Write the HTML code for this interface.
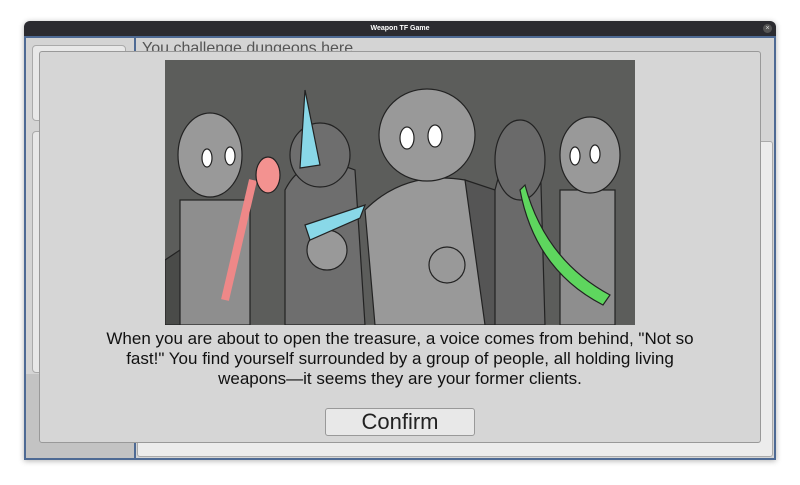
<!DOCTYPE html>
<html><head><style>
body{margin:0;width:800px;height:485px;background:#fff;position:relative;overflow:hidden;font-family:"Liberation Sans",sans-serif}
.a{position:absolute}
</style></head><body>
<div class="a" style="left:24px;top:21px;width:752px;height:439px;background:#d4d4d4;border-radius:6px 6px 0 0;box-shadow:0 1px 6px rgba(0,0,0,.3);overflow:hidden">
 <div class="a" style="left:0;top:0;width:752px;height:15px;background:#2b2b30;color:#fff;font-size:7px;font-weight:bold;text-align:center;line-height:15px">Weapon TF Game</div>
 <div class="a" style="right:4px;top:3px;width:9px;height:9px;border-radius:50%;background:#555;color:#ddd;font-size:7px;line-height:9px;text-align:center">×</div>
 <div class="a" style="left:0;top:15px;width:752px;height:424px;border:2px solid #4e6a94;border-top-width:2px;box-sizing:border-box"></div>
 <div class="a" style="left:8px;top:24px;width:92px;height:74px;background:#e8e8e8;border:1px solid #aaa;border-radius:4px"></div>
 <div class="a" style="left:8px;top:110px;width:92px;height:240px;background:#e8e8e8;border:1px solid #aaa;border-radius:4px"></div>
 <div class="a" style="left:2px;top:353px;width:108px;height:84px;background:#c3c3c3"></div>
 <div class="a" style="left:110px;top:17px;width:2px;height:420px;background:#4e6a94"></div>
 <div class="a" style="left:118px;top:19px;font-size:16px;color:#555">You challenge dungeons here</div>
 <div class="a" style="left:113px;top:120px;width:634px;height:314px;background:#ececec;border:1px solid #aaa;border-radius:3px"></div>
</div>
<div class="a" style="left:39px;top:51px;width:720px;height:390px;background:#d6d6d6;border:1px solid #999;border-radius:3px"></div>
<svg class="a" style="left:165px;top:60px" width="470" height="265" viewBox="0 0 470 265">
<rect width="470" height="265" fill="#5c5d5b"/>
<g stroke="#222" stroke-width="1.2" fill="#999">
<path d="M0 200 L30 180 L60 265 L0 265Z" fill="#4a4b49"/>
<path d="M120 130 Q140 90 190 110 L200 265 L120 265Z" fill="#6e6e6e"/>
<ellipse cx="155" cy="95" rx="30" ry="32" fill="#6e6e6e"/>
<path d="M300 120 L360 140 L370 265 L300 265Z" fill="#555"/>
<path d="M330 130 Q350 50 375 90 L380 265 L330 265Z" fill="#6a6a6a"/>
<ellipse cx="355" cy="100" rx="25" ry="40" fill="#6a6a6a"/>
<rect x="15" y="140" width="70" height="125" fill="#8e8e8e"/>
<ellipse cx="45" cy="95" rx="32" ry="42" fill="#999"/>
<rect x="395" y="130" width="55" height="135" fill="#8e8e8e"/>
<ellipse cx="425" cy="95" rx="30" ry="38" fill="#999"/>
<path d="M200 150 Q240 110 300 120 L320 265 L210 265Z" fill="#999"/>
<ellipse cx="262" cy="75" rx="48" ry="46" fill="#999"/>
<circle cx="162" cy="190" r="20" fill="#999"/>
<circle cx="282" cy="205" r="18" fill="#999"/>
<path d="M60 240 L88 120" stroke="#e88" stroke-width="8"/>
<ellipse cx="103" cy="115" rx="12" ry="18" fill="#f39290"/>
<path d="M140 30 L155 105 L135 108Z" fill="#89d8e8"/>
<path d="M140 165 L200 145 L195 158 L145 180Z" fill="#89d8e8"/>
<path d="M360 125 Q380 200 445 235 L438 245 Q370 210 355 130Z" fill="#5ed65e"/>
<g fill="#fff"><ellipse cx="42" cy="98" rx="5" ry="9"/><ellipse cx="65" cy="96" rx="5" ry="9"/><ellipse cx="242" cy="78" rx="7" ry="11"/><ellipse cx="270" cy="76" rx="7" ry="11"/><ellipse cx="410" cy="96" rx="5" ry="9"/><ellipse cx="430" cy="94" rx="5" ry="9"/></g>
</g>
</svg>
<div class="a" style="left:90px;top:329px;width:620px;text-align:center;font-size:17px;line-height:20px;color:#111">When you are about to open the treasure, a voice comes from behind, "Not so fast!" You find yourself surrounded by a group of people, all holding living weapons—it seems they are your former clients.</div>
<div class="a" style="left:325px;top:408px;width:148px;height:26px;background:#e8e8e8;border:1px solid #999;border-radius:3px;font-size:22px;line-height:26px;text-align:center;color:#222">Confirm</div>
</body></html>
